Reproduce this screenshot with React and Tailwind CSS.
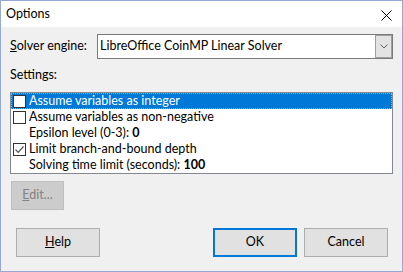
import React from "react";

function Check({ checked }) {
  return (
    <span className="ml-[1px] mr-[3px] w-[13px] h-[13px] border border-[#333333] bg-white flex items-center justify-center shrink-0">
      {checked && (
        <svg width="11" height="11" viewBox="0 0 11 11">
          <path d="M1.5 5.5 L4.2 8.3 L9.5 2.5" fill="none" stroke="#555" strokeWidth="1.2" />
        </svg>
      )}
    </span>
  );
}

function Row({ children, checkbox, checked, selected }) {
  return (
    <div
      className={
        "h-[16px] flex items-center leading-none " +
        (selected
          ? "bg-[#0078d7] text-white border border-dotted border-[#f29b3a]"
          : "border border-transparent")
      }
    >
      {checkbox ? <Check checked={checked} /> : <span className="w-[17px] shrink-0" />}
      <span className="whitespace-nowrap">{children}</span>
    </div>
  );
}

export default function App() {
  return (
    <div
      className="w-[403px] h-[272px] flex flex-col border border-[#95a9d4] bg-[#f0f0f0] text-[12.5px] text-black"
      style={{ fontFamily: 'Lato, "Noto Sans", sans-serif' }}
    >
      <div className="h-[26px] bg-white flex items-center justify-between pl-[5px] pr-[10px] shrink-0">
        <span className="leading-none mt-[1px]">Options</span>
        <svg width="11" height="11" viewBox="0 0 11 11" className="mt-[2px]">
          <path d="M0.5 0.5 L10.5 10.5 M10.5 0.5 L0.5 10.5" stroke="#000" strokeWidth="1" />
        </svg>
      </div>
      <div className="flex-1 flex flex-col pl-[9px] pr-[9px] pt-[7px]">
        <div className="flex items-center h-[25px]">
          <span className="w-[87px] shrink-0">
            <span className="underline">S</span>olver engine:
          </span>
          <div className="flex-1 h-[25px] border border-[#7a7a7a] bg-white flex items-center">
            <span className="flex-1 pl-[2px] whitespace-nowrap">LibreOffice CoinMP Linear Solver</span>
            <div className="w-[17px] h-[23px] border border-[#a0a0a0] bg-[#e3e3e3] flex items-center justify-center">
              <svg width="8" height="5" viewBox="0 0 8 5">
                <path d="M0.5 0.5 L4 4 L7.5 0.5" fill="none" stroke="#606060" strokeWidth="1" />
              </svg>
            </div>
          </div>
        </div>
        <div className="mt-[8px] h-[16px] leading-[16px]">Settings:</div>
        <div className="mt-[9px] h-[82px] border border-[#828790] bg-white flex flex-col">
          <Row checkbox selected>Assume variables as integer</Row>
          <Row checkbox>Assume variables as non-negative</Row>
          <Row>
            Epsilon level (0-3): <b>0</b>
          </Row>
          <Row checkbox checked>Limit branch-and-bound depth</Row>
          <Row>
            Solving time limit (seconds): <b>100</b>
          </Row>
        </div>
        <div className="mt-[7px] ml-[1px] w-[53px] h-[29px] border border-[#bfbfbf] bg-[#cccccc] text-[#838383] flex items-center justify-center">
          <span>
            <span className="underline">E</span>dit...
          </span>
        </div>
        <div className="mt-[18px] flex items-center">
          <div className="ml-[6px] w-[84px] h-[29px] border border-[#adadad] bg-[#e1e1e1] flex items-center justify-center">
            <span>
              <span className="underline">H</span>elp
            </span>
          </div>
          <div className="ml-auto w-[84px] h-[29px] border-2 border-[#0078d7] bg-[#e1e1e1] flex items-center justify-center">
            OK
          </div>
          <div className="ml-[7px] mr-[5px] w-[84px] h-[29px] border border-[#adadad] bg-[#e1e1e1] flex items-center justify-center">
            Cancel
          </div>
        </div>
      </div>
    </div>
  );
}
